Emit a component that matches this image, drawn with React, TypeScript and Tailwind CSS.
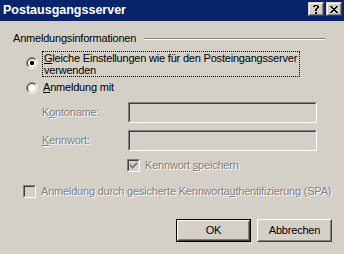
import React from 'react';

// Windows classic look, Tahoma-ish metrics via Liberation Sans
const disabledText = 'text-[#808080] [text-shadow:1px_1px_0_#ffffff]';

function Radio({ checked }: { checked?: boolean }) {
  const arc = (r: number) => {
    const d = r * 0.7071;
    return {
      tl: `M ${6 - d} ${6 + d} A ${r} ${r} 0 0 1 ${6 + d} ${6 - d}`,
      br: `M ${6 + d} ${6 - d} A ${r} ${r} 0 0 1 ${6 - d} ${6 + d}`,
    };
  };
  const outer = arc(5.5);
  const inner = arc(4.5);
  return (
    <svg width="12" height="12" viewBox="0 0 12 12" className="shrink-0">
      <circle cx="6" cy="6" r="4.5" fill="#ffffff" />
      <path d={outer.tl} stroke="#808080" fill="none" strokeWidth="1" />
      <path d={outer.br} stroke="#ffffff" fill="none" strokeWidth="1" />
      <path d={inner.tl} stroke="#404040" fill="none" strokeWidth="1" />
      <path d={inner.br} stroke="#d4d0c8" fill="none" strokeWidth="1" />
      {checked && <rect x="4" y="4" width="4" height="4" rx="1.2" fill="#000000" />}
    </svg>
  );
}

function Checkbox({ checked }: { checked?: boolean }) {
  return (
    <div className="w-[13px] h-[13px] shrink-0 border border-t-[#808080] border-l-[#808080] border-b-white border-r-white">
      <div className="w-full h-full border border-t-[#404040] border-l-[#404040] border-b-[#d4d0c8] border-r-[#d4d0c8] bg-[#d4d0c8] flex items-center justify-center">
        {checked && (
          <svg width="7" height="7" viewBox="0 0 7 7" shapeRendering="crispEdges">
            <path
              fill="#808080"
              d="M6 0h1v1h-1z M5 1h2v1h-2z M0 2h1v1h-1z M4 2h3v1h-3z M0 3h2v1h-2z M3 3h3v1h-3z M0 4h5v1h-5z M1 5h3v1h-3z M2 6h1v1h-1z"
            />
          </svg>
        )}
      </div>
    </div>
  );
}

function TextBox() {
  return (
    <div className="w-[189px] h-[21px] border border-t-[#808080] border-l-[#808080] border-b-white border-r-white">
      <div className="w-full h-full border border-t-[#404040] border-l-[#404040] border-b-[#d4d0c8] border-r-[#d4d0c8] bg-[#d4d0c8]" />
    </div>
  );
}

function CaptionButton({ children }: { children: React.ReactNode }) {
  return (
    <div className="w-[16px] h-[14px] border border-t-[#d4d0c8] border-l-[#d4d0c8] border-b-[#404040] border-r-[#404040]">
      <div className="w-full h-full border border-t-white border-l-white border-b-[#808080] border-r-[#808080] bg-[#d4d0c8] flex items-center justify-center">
        {children}
      </div>
    </div>
  );
}

function Button({ label, isDefault }: { label: string; isDefault?: boolean }) {
  const bevel = (
    <div className="w-full h-full border border-t-white border-l-white border-b-[#404040] border-r-[#404040]">
      <div className="w-full h-full border border-t-[#d4d0c8] border-l-[#d4d0c8] border-b-[#808080] border-r-[#808080] flex items-center justify-center">
        {label}
      </div>
    </div>
  );
  return (
    <div className={`w-[75px] h-[23px] ${isDefault ? 'border border-black' : ''}`}>{bevel}</div>
  );
}

export default function App() {
  return (
    <div className="w-[344px] h-[254px] overflow-hidden bg-[#d4d0c8] text-black text-[11px] leading-[13px] tracking-[-0.2px] font-['Liberation_Sans',Arial,sans-serif]">
      <div className="h-[21px] bg-[#0a246a] flex items-center pl-[3px] pr-[2px]">
        <span className="font-bold text-white text-[12.5px] tracking-normal">Postausgangsserver</span>
        <div className="ml-auto self-start mt-[2px] flex gap-[2px]">
          <CaptionButton>
            <svg width="6" height="9" viewBox="0 0 6 9" shapeRendering="crispEdges">
              <path
                fill="#000"
                d="M1 0h4v1h-4z M0 1h2v1h-2z M4 1h2v1h-2z M4 2h2v1h-2z M3 3h2v1h-2z M2 4h2v1h-2z M2 5h2v1h-2z M2 7h2v2h-2z"
              />
            </svg>
          </CaptionButton>
          <CaptionButton>
            <svg width="8" height="7" viewBox="0 0 8 7" shapeRendering="crispEdges">
              <path
                fill="#000"
                d="M0 0h2v1h-2z M6 0h2v1h-2z M1 1h2v1h-2z M5 1h2v1h-2z M2 2h4v1h-4z M3 3h2v1h-2z M2 4h4v1h-4z M1 5h2v1h-2z M5 5h2v1h-2z M0 6h2v1h-2z M6 6h2v1h-2z"
              />
            </svg>
          </CaptionButton>
        </div>
      </div>

      <div className="flex items-center mt-[11px] pl-[13px] pr-[19px] h-[13px]">
        <span className="whitespace-nowrap">Anmeldungsinformationen</span>
        <div className="flex-1 ml-[8px] h-[2px] border-t border-t-[#808080] border-b border-b-white" />
      </div>

      <div className="flex items-start mt-[6px] ml-[26px]">
        <div className="mt-[6px]">
          <Radio checked />
        </div>
        <div className="ml-[4px] w-[258px] border border-dotted border-black px-[1px] leading-[12px] whitespace-nowrap">
          <span className="underline">G</span>leiche Einstellungen wie für den Posteingangsserver
          <br />
          verwenden
        </div>
      </div>

      <div className="flex items-center mt-[4px] ml-[26px] h-[13px]">
        <Radio />
        <span className="ml-[5px]">
          <span className="underline">A</span>nmeldung mit
        </span>
      </div>

      <div className="flex items-center mt-[8px] ml-[42px]">
        <span className={`w-[86px] ${disabledText}`}>
          K<span className="underline">o</span>ntoname:
        </span>
        <TextBox />
      </div>

      <div className="flex items-center mt-[7px] ml-[42px]">
        <span className={`w-[86px] ${disabledText}`}>
          <span className="underline">K</span>ennwort:
        </span>
        <TextBox />
      </div>

      <div className="flex items-center mt-[8px] ml-[127px]">
        <Checkbox checked />
        <span className={`ml-[5px] ${disabledText}`}>
          Kennwort <span className="underline">s</span>peichern
        </span>
      </div>

      <div className="flex items-center mt-[13px] ml-[23px]">
        <Checkbox />
        <span className={`ml-[5px] whitespace-nowrap ${disabledText}`}>
          Anmeldung durch gesicherte Kennworta<span className="underline">u</span>thentifizierung (SPA)
        </span>
      </div>

      <div className="flex justify-end gap-[6px] mt-[21px] pr-[12px]">
        <Button label="OK" isDefault />
        <Button label="Abbrechen" />
      </div>
    </div>
  );
}
